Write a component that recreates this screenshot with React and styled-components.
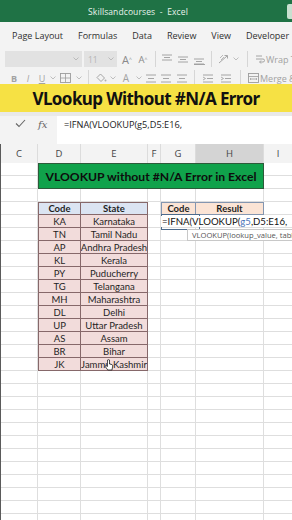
import React from "react";
import styled, { createGlobalStyle } from "styled-components";

const GlobalStyle = createGlobalStyle`
  html, body {
    margin: 0;
    padding: 0;
    width: 292px;
    height: 520px;
    overflow: hidden;
    background: #fff;
  }
  * { box-sizing: border-box; }
`;

const COLS = "37px 43px 67px 13px 35px 68px 29px";

const Page = styled.div`
  width: 292px;
  height: 520px;
  overflow: hidden;
  display: flex;
  flex-direction: column;
  background: #fff;
  font-family: "Open Sans", "Noto Sans", sans-serif;
`;

const TitleBar = styled.div`
  height: 22px;
  flex: none;
  background: #1f7245;
  display: grid;
  grid-template-columns: 1fr auto 1fr;
  align-items: center;
  color: #e9f3ec;
  font-size: 8.5px;
`;

const TitleText = styled.div`
  grid-column: 2;
  margin-right: 16px;
  letter-spacing: 0.1px;
`;

const TitleStub = styled.div`
  grid-column: 3;
  justify-self: end;
  width: 5px;
  height: 15px;
  background: #c9e0d0;
  border-radius: 2px 0 0 2px;
`;

const TabBar = styled.div`
  height: 26px;
  flex: none;
  background: #f3f3f3;
  display: flex;
  align-items: center;
  padding-left: 12px;
  gap: 15px;
  font-size: 9px;
  color: #2f2f2f;
  white-space: nowrap;
`;

const Ribbon = styled.div`
  height: 36px;
  flex: none;
  background: #f3f3f3;
  overflow: hidden;
  display: flex;
  flex-direction: column;
`;

const RibbonRow = styled.div`
  height: 17px;
  margin-top: ${(p) => p.$top}px;
  display: flex;
  align-items: center;
  white-space: nowrap;
  color: #a2a2a2;
  font-size: 9px;
`;

const Slot = styled.div`
  width: ${(p) => p.$w}px;
  flex: none;
  display: flex;
  align-items: center;
  justify-content: ${(p) => p.$justify || "center"};
  font-weight: ${(p) => (p.$bold ? 700 : 400)};
  font-style: ${(p) => (p.$italic ? "italic" : "normal")};
  text-decoration: ${(p) => (p.$under ? "underline" : "none")};
  color: ${(p) => p.$color || "inherit"};
  font-size: ${(p) => p.$size || 9}px;
`;

const DropBox = styled.div`
  width: ${(p) => p.$w}px;
  height: 16px;
  flex: none;
  margin-right: 2px;
  background: #e2e2e2;
  display: flex;
  align-items: center;
  justify-content: space-between;
  padding: 0 3px 0 4px;
  color: #b5b5b5;
  font-size: 8.5px;
`;

const Divider = styled.div`
  width: 1px;
  height: 16px;
  flex: none;
  margin: 0 ${(p) => p.$m || 5}px;
  background: #d6d6d6;
`;

const Banner = styled.div`
  height: 28px;
  flex: none;
  background: #f6e144;
  display: flex;
  align-items: center;
  justify-content: center;
  font-family: "Noto Sans", "Open Sans", sans-serif;
  font-weight: 700;
  font-size: 17px;
  color: #111;
  letter-spacing: -0.6px;
`;

const Band = styled.div`
  height: 4px;
  flex: none;
  background: #e9e9e9;
`;

const FormulaBar = styled.div`
  height: 28px;
  flex: none;
  display: flex;
  background: #f3f3f3;
`;

const FormulaTools = styled.div`
  width: 57px;
  flex: none;
  display: flex;
  align-items: flex-start;
  padding-top: 3px;
  color: #555;
`;

const Fx = styled.span`
  font-family: "DejaVu Serif", "Liberation Serif", serif;
  font-style: italic;
  font-size: 10px;
  color: #666;
  margin-left: 12px;
`;

const FormulaInput = styled.div`
  flex: 1;
  background: #fff;
  padding: 2px 0 0 7px;
  font-size: 9.2px;
  color: #222;
  white-space: nowrap;
`;

const ColHeaders = styled.div`
  height: 19px;
  flex: none;
  display: grid;
  grid-template-columns: ${COLS};
  background: #f3f3f3;
  border-left: 1px solid #5a5a5a;
`;

const ColHead = styled.div`
  display: flex;
  align-items: center;
  justify-content: center;
  font-size: 9.5px;
  color: #444;
  border-right: 1px solid #dcdcdc;
  background: ${(p) => (p.$selected ? "#d4d4d4" : "transparent")};
`;

const Sheet = styled.div`
  flex: 1;
  position: relative;
  display: grid;
  grid-template-columns: ${COLS};
  grid-auto-rows: 13px;
  border-left: 1px solid #5a5a5a;
  font-family: Lato, "Open Sans", sans-serif;
  font-size: 9.5px;
  color: #1f1f1f;
`;

const Cell = styled.div`
  border-right: 1px solid #dedede;
  border-bottom: 1px solid #dedede;
  display: flex;
  align-items: center;
  justify-content: center;
  white-space: nowrap;
  overflow: hidden;
`;

const TableCell = styled(Cell)`
  background: ${(p) => (p.$head ? "#dbe4f2" : "#f2dcdb")};
  font-weight: ${(p) => (p.$head ? 700 : 400)};
  border-right-color: #86686a;
  border-bottom-color: #86686a;
  border-left: ${(p) => (p.$first ? "1px solid #86686a" : "none")};
  border-top: ${(p) => (p.$top ? "1px solid #86686a" : "none")};
`;

const ResultHead = styled(Cell)`
  background: #fbe4d5;
  font-weight: 700;
  border-top: 1px solid #8496b0;
  border-right-color: #8496b0;
  border-bottom-color: #8496b0;
  border-left: ${(p) => (p.$first ? "1px solid #8496b0" : "none")};
`;

const TitleCell = styled.div`
  grid-column: 2 / 7;
  grid-row: span 2;
  background: #10a24b;
  border: 1px solid #2d5a3a;
  display: flex;
  align-items: center;
  justify-content: center;
  font-weight: 700;
  font-size: 12.2px;
  color: #0d0d0d;
`;

const EditCell = styled.div`
  grid-column: span 2;
  position: relative;
  z-index: 2;
  border-bottom: 1px solid #dedede;
  display: flex;
  align-items: center;

  &::before {
    content: "";
    position: absolute;
    left: 0;
    top: -1px;
    width: 37px;
    height: 14px;
    border: 1px solid #4d6b8c;
  }
`;

const EditText = styled.span`
  background: #fff;
  padding: 0 3px 0 1px;
  font-size: 9.6px;
  color: #111;
  white-space: nowrap;
  position: relative;
`;

const Ref = styled.span`
  color: #4b74b8;
`;

const Tooltip = styled.div`
  position: absolute;
  left: 186px;
  top: 66px;
  height: 12px;
  padding: 0 0 0 4px;
  width: 120px;
  background: #fff;
  border: 1px solid #c8c8c8;
  font-family: "Open Sans", sans-serif;
  font-size: 7.6px;
  color: #555;
  white-space: nowrap;
  display: flex;
  align-items: center;
  z-index: 3;
`;

const Cursor = styled.svg`
  position: absolute;
  left: 103px;
  top: 196px;
  z-index: 3;
`;

const Chevron = () => (
  <svg width="6" height="4" viewBox="0 0 6 4">
    <path d="M0.5 0.5 L3 3 L5.5 0.5" fill="none" stroke="#b0b0b0" strokeWidth="0.8" />
  </svg>
);

const AlignIcon = ({ variant }) => {
  const y0 = variant === "top" ? 1 : variant === "mid" ? 3 : 5;
  return (
    <svg width="11" height="11" viewBox="0 0 11 11">
      {[[0, 10], [2, 8], [0, 10]].map(([a, b], i) => (
        <line key={i} x1={a} x2={b} y1={y0 + i * 2.5} y2={y0 + i * 2.5} stroke="#9c9c9c" strokeWidth="0.9" />
      ))}
      {variant === "bot" && <line x1="0" x2="11" y1="10.5" y2="10.5" stroke="#9c9c9c" strokeWidth="0.9" />}
    </svg>
  );
};

const HAlignIcon = () => (
  <svg width="11" height="9" viewBox="0 0 11 9">
    <line x1="0" x2="10" y1="1" y2="1" stroke="#9c9c9c" strokeWidth="0.9" />
    <line x1="2" x2="8" y1="4.5" y2="4.5" stroke="#9c9c9c" strokeWidth="0.9" />
    <line x1="0" x2="10" y1="8" y2="8" stroke="#9c9c9c" strokeWidth="0.9" />
  </svg>
);

const IndentIcon = () => (
  <svg width="11" height="9" viewBox="0 0 11 9">
    <line x1="0" x2="10" y1="1" y2="1" stroke="#9c9c9c" strokeWidth="0.9" />
    <line x1="4" x2="10" y1="4.5" y2="4.5" stroke="#9c9c9c" strokeWidth="0.9" />
    <path d="M0 3 L2.5 4.5 L0 6" fill="none" stroke="#9c9c9c" strokeWidth="0.8" />
    <line x1="0" x2="10" y1="8" y2="8" stroke="#9c9c9c" strokeWidth="0.9" />
  </svg>
);

const OrientIcon = () => (
  <svg width="12" height="11" viewBox="0 0 12 11">
    <path d="M1 9 L9 2" stroke="#9c9c9c" strokeWidth="0.9" />
    <path d="M6.5 1.5 L9.5 1.5 L9.5 4.5" fill="none" stroke="#9c9c9c" strokeWidth="0.9" />
    <path d="M2 4 L5 1 M3 6 L6 3" stroke="#a8a8a8" strokeWidth="0.8" />
  </svg>
);

const WrapIcon = () => (
  <svg width="10" height="11" viewBox="0 0 10 11">
    <path d="M1 2 H7 M1 5 H8 Q9.5 5 9.5 6.5 Q9.5 8 8 8 H5 M6 6.5 L4.5 8 L6 9.5" fill="none" stroke="#9c9c9c" strokeWidth="0.9" />
  </svg>
);

const MergeIcon = () => (
  <svg width="11" height="10" viewBox="0 0 11 10">
    <rect x="0.5" y="0.5" width="10" height="9" fill="none" stroke="#9c9c9c" strokeWidth="0.9" />
    <path d="M0.5 3.5 H10.5 M3 6 H8 M3 5 L2 6 L3 7 M8 5 L9 6 L8 7" fill="none" stroke="#9c9c9c" strokeWidth="0.8" />
  </svg>
);

const BorderIcon = () => (
  <svg width="11" height="10" viewBox="0 0 11 10">
    <rect x="0.5" y="0.5" width="10" height="9" fill="none" stroke="#9c9c9c" strokeWidth="0.9" />
    <path d="M5.5 0.5 V9.5 M0.5 5 H10.5" stroke="#9c9c9c" strokeWidth="0.8" />
  </svg>
);

const FillIcon = () => (
  <svg width="11" height="10" viewBox="0 0 11 10">
    <path d="M4.5 1 L8.5 5 L5 8.5 L1 4.5 Z" fill="none" stroke="#9c9c9c" strokeWidth="0.9" />
    <circle cx="9.5" cy="7.5" r="1" fill="#b0b0b0" />
  </svg>
);

const Check = () => (
  <svg width="11" height="9" viewBox="0 0 11 9">
    <path d="M1 4.5 L4 7.5 L10 1" fill="none" stroke="#666" strokeWidth="1.1" />
  </svg>
);

const states = [
  ["KA", "Karnataka"],
  ["TN", "Tamil Nadu"],
  ["AP", "Andhra Pradesh"],
  ["KL", "Kerala"],
  ["PY", "Puducherry"],
  ["TG", "Telangana"],
  ["MH", "Maharashtra"],
  ["DL", "Delhi"],
  ["UP", "Uttar Pradesh"],
  ["AS", "Assam"],
  ["BR", "Bihar"],
  ["JK", "Jammu Kashmir"],
];

const letters = ["C", "D", "E", "F", "G", "H", "I"];

const blankRow = (key) =>
  letters.map((l) => <Cell key={`${key}-${l}`} />);

export default function App() {
  const cells = [];

  // rows 1-2: merged green title across D:H
  cells.push(<Cell key="r1c" />);
  cells.push(<TitleCell key="title">VLOOKUP without #N/A Error in Excel</TitleCell>);
  cells.push(<Cell key="r1i" />);
  cells.push(<Cell key="r2c" />);
  cells.push(<Cell key="r2i" />);

  cells.push(...blankRow("r3"));

  // header row
  cells.push(<Cell key="h-c" />);
  cells.push(<TableCell key="h-d" $head $first $top>Code</TableCell>);
  cells.push(<TableCell key="h-e" $head $top>State</TableCell>);
  cells.push(<Cell key="h-f" />);
  cells.push(<ResultHead key="h-g" $first>Code</ResultHead>);
  cells.push(<ResultHead key="h-h">Result</ResultHead>);
  cells.push(<Cell key="h-i" />);

  states.forEach(([code, name], i) => {
    cells.push(<Cell key={`${code}-c`} />);
    cells.push(<TableCell key={`${code}-d`} $first>{code}</TableCell>);
    cells.push(<TableCell key={`${code}-e`}>{name}</TableCell>);
    cells.push(<Cell key={`${code}-f`} />);
    if (i === 0) {
      cells.push(
        <EditCell key="edit">
          <EditText>
            =IFNA(VLOOKUP(<Ref>g5</Ref>,D5:E16,
          </EditText>
        </EditCell>
      );
    } else {
      cells.push(<Cell key={`${code}-g`} />);
      cells.push(<Cell key={`${code}-h`} />);
    }
    cells.push(<Cell key={`${code}-i`} />);
  });

  for (let r = 0; r < 12; r++) cells.push(...blankRow(`b${r}`));

  return (
    <>
      <GlobalStyle />
      <Page>
        <TitleBar>
          <TitleText>Skillsandcourses&nbsp; -&nbsp; Excel</TitleText>
          <TitleStub />
        </TitleBar>

        <TabBar>
          <span>Page Layout</span>
          <span>Formulas</span>
          <span>Data</span>
          <span>Review</span>
          <span>View</span>
          <span>Developer</span>
        </TabBar>

        <Ribbon>
          <RibbonRow $top={3}>
            <Slot $w={5} />
            <DropBox $w={77}>
              <span />
              <Chevron />
            </DropBox>
            <DropBox $w={33}>
              <span>11</span>
              <Chevron />
            </DropBox>
            <Slot $w={16} $size={11} $color="#8a8a8a">A<sup style={{ fontSize: 5 }}>^</sup></Slot>
            <Slot $w={16} $size={9.5} $color="#8a8a8a">A<sup style={{ fontSize: 5 }}>^</sup></Slot>
            <Divider $m={4} />
            <Slot $w={15}><AlignIcon variant="top" /></Slot>
            <Slot $w={16}><AlignIcon variant="mid" /></Slot>
            <Slot $w={16}><AlignIcon variant="bot" /></Slot>
            <Divider $m={4} />
            <Slot $w={15}><OrientIcon /></Slot>
            <Slot $w={10}><Chevron /></Slot>
            <Divider $m={6} />
            <Slot $w={12}><WrapIcon /></Slot>
            <Slot $w={40} $justify="flex-start">Wrap Text</Slot>
          </RibbonRow>
          <RibbonRow $top={3}>
            <Slot $w={8} />
            <Slot $w={12} $bold>B</Slot>
            <Slot $w={16} $italic>I</Slot>
            <Slot $w={12} $under>U</Slot>
            <Slot $w={9}><Chevron /></Slot>
            <Slot $w={17}><BorderIcon /></Slot>
            <Slot $w={9}><Chevron /></Slot>
            <Divider $m={5} />
            <Slot $w={14}><FillIcon /></Slot>
            <Slot $w={10}><Chevron /></Slot>
            <Slot $w={16} $size={10}>A</Slot>
            <Slot $w={10}><Chevron /></Slot>
            <Slot $w={14}><HAlignIcon /></Slot>
            <Slot $w={16}><HAlignIcon /></Slot>
            <Slot $w={16}><HAlignIcon /></Slot>
            <Divider $m={4} />
            <Slot $w={18}><IndentIcon /></Slot>
            <Slot $w={18}><IndentIcon /></Slot>
            <Divider $m={5} />
            <Slot $w={14}><MergeIcon /></Slot>
            <Slot $w={40} $justify="flex-start">Merge &amp; Center</Slot>
          </RibbonRow>
        </Ribbon>

        <Banner>VLookup Without #N/A Error</Banner>
        <Band />

        <FormulaBar>
          <FormulaTools>
            <span style={{ width: 15 }} />
            <Check />
            <Fx>fx</Fx>
          </FormulaTools>
          <FormulaInput>=IFNA(VLOOKUP(g5,D5:E16,</FormulaInput>
        </FormulaBar>

        <ColHeaders>
          {letters.map((l) => (
            <ColHead key={l} $selected={l === "H"}>
              {l}
            </ColHead>
          ))}
        </ColHeaders>

        <Sheet>
          {cells}
          <Tooltip>VLOOKUP(lookup_value, table_array</Tooltip>
          <Cursor width="10" height="12" viewBox="0 0 10 12">
            <path
              d="M3.5 1 Q4.5 0.3 5.5 1 V5 L8 5.6 Q9 6 8.7 7 L8 11 H3.8 L1.2 7.5 Q1 6.5 2 6.6 L3.5 7.5 Z"
              fill="#fff"
              stroke="#222"
              strokeWidth="0.8"
            />
          </Cursor>
        </Sheet>
      </Page>
    </>
  );
}
